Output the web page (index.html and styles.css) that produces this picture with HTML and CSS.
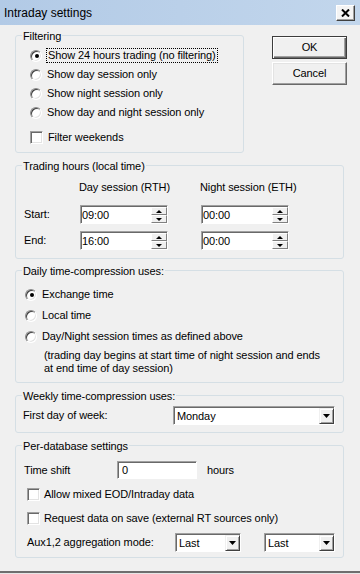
FILE: index.html
```html
<!DOCTYPE html>
<html>
<head>
<meta charset="utf-8">
<title>Intraday settings</title>
<link rel="stylesheet" href="styles.css">
</head>
<body>
<div class="window">
  <div class="titlebar">
    <span class="title">Intraday settings</span>
    <span class="close"><svg width="9" height="8" viewBox="0 0 9 8"><path d="M1 0.5 L8 7.5 M8 0.5 L1 7.5" stroke="#000" stroke-width="2"/></svg></span>
  </div>

  <div class="top">
    <fieldset class="group filtering">
      <legend>Filtering</legend>
      <div class="opts">
        <div class="opt"><span class="radio on"></span><span class="focus">Show 24 hours trading (no filtering)</span></div>
        <div class="opt"><span class="radio"></span><span>Show day session only</span></div>
        <div class="opt"><span class="radio"></span><span>Show night session only</span></div>
        <div class="opt"><span class="radio"></span><span>Show day and night session only</span></div>
        <div class="opt chkrow"><span class="chk"></span><span>Filter weekends</span></div>
      </div>
    </fieldset>
    <div class="buttons">
      <div class="btn default">OK</div>
      <div class="btn">Cancel</div>
    </div>
  </div>

  <fieldset class="group trading">
    <legend>Trading hours (local time)</legend>
    <div class="hours">
      <span></span>
      <span class="colhead">Day session (RTH)</span>
      <span></span>
      <span class="colhead">Night session (ETH)</span>

      <span>Start:</span>
      <div class="spin"><span class="val">09:00</span><span class="updown"><i class="up"></i><i class="down"></i></span></div>
      <span></span>
      <div class="spin"><span class="val">00:00</span><span class="updown"><i class="up"></i><i class="down"></i></span></div>

      <span>End:</span>
      <div class="spin"><span class="val">16:00</span><span class="updown"><i class="up"></i><i class="down"></i></span></div>
      <span></span>
      <div class="spin"><span class="val">00:00</span><span class="updown"><i class="up"></i><i class="down"></i></span></div>
    </div>
  </fieldset>

  <fieldset class="group daily">
    <legend>Daily time-compression uses:</legend>
    <div class="dopts">
      <div class="drow"><span class="radio on"></span><span>Exchange time</span></div>
      <div class="drow"><span class="radio"></span><span>Local time</span></div>
      <div class="drow"><span class="radio"></span><span>Day/Night session times as defined above</span></div>
      <p class="note">(trading day begins at start time of night session and ends<br>at end time of day session)</p>
    </div>
  </fieldset>

  <fieldset class="group weekly">
    <legend>Weekly time-compression uses:</legend>
    <div class="week">
      <span class="wlabel">First day of week:</span>
      <div class="combo wcombo"><span class="val">Monday</span><span class="arrow"><svg width="7" height="4" viewBox="0 0 7 4"><polygon points="0,0 7,0 3.5,4" fill="#000"/></svg></span></div>
    </div>
  </fieldset>

  <fieldset class="group perdb">
    <legend>Per-database settings</legend>
    <div class="db">
      <div class="shift">
        <span class="slabel">Time shift</span>
        <div class="field">0</div>
        <span class="unit">hours</span>
      </div>
      <div class="cb cb1"><span class="chk"></span><span>Allow mixed EOD/Intraday data</span></div>
      <div class="cb cb2"><span class="chk"></span><span>Request data on save (external RT sources only)</span></div>
      <div class="aux">
        <span class="alabel">Aux1,2 aggregation mode:</span>
        <div class="combo acombo1"><span class="val">Last</span><span class="arrow"><svg width="7" height="4" viewBox="0 0 7 4"><polygon points="0,0 7,0 3.5,4" fill="#000"/></svg></span></div>
        <div class="combo acombo2"><span class="val">Last</span><span class="arrow"><svg width="7" height="4" viewBox="0 0 7 4"><polygon points="0,0 7,0 3.5,4" fill="#000"/></svg></span></div>
      </div>
    </div>
  </fieldset>
</div>
</body>
</html>
```
FILE: styles.css
```css
* { box-sizing: border-box; }

body {
  margin: 0;
  font: 11px/13px "Liberation Sans", Arial, sans-serif;
  letter-spacing: -0.1px;
  color: #000;
  background: #f0f0f0;
}

.window {
  width: 360px;
  height: 574px;
  background: #f0f0f0;
  overflow: hidden;
  box-shadow: inset 0 -1px #e6e6e6, inset 0 -3px #6e6e6e;
}

/* title bar */
.titlebar {
  height: 25px;
  display: flex;
  align-items: center;
  justify-content: space-between;
  padding: 0 5px 0 4px;
  background: linear-gradient(to right, #b2cae6, #c2d6ec);
}
.title {
  font-size: 12px;
  line-height: 15px;
  padding-top: 2px;
  letter-spacing: 0;
}
.close {
  width: 19px;
  height: 16px;
  display: flex;
  align-items: center;
  justify-content: center;
  background: #f4f4f4;
  border: 1px solid;
  border-color: #fff #404040 #404040 #fff;
  box-shadow: inset -1px -1px #a0a0a0;
}

/* group boxes */
.group {
  margin: 4px 0 0 15px;
  padding: 0;
  width: 329px;
  min-width: 0;
  border: 1px solid #d5dfe5;
  border-radius: 3px;
}
.group legend {
  padding: 3px 1px 0;
  margin-left: 6px;
  line-height: 13px;
}

/* top row */
.top {
  display: flex;
  align-items: flex-start;
  padding: 2px 0 0 15px;
}
.filtering {
  margin: 0;
  width: 229px;
}
.buttons {
  display: flex;
  flex-direction: column;
  gap: 3px;
  margin: 9px 0 0 28px;
}
.btn {
  width: 75px;
  height: 23px;
  display: flex;
  align-items: center;
  justify-content: center;
  background: #f0f0f0;
  border: 1px solid;
  border-color: #fff #696969 #696969 #fff;
  box-shadow: inset -1px -1px #a0a0a0, inset 1px 1px #e3e3e3;
}
.btn.default {
  border-color: #3c3c3c;
  box-shadow: inset 1px 1px #fff, inset -1px -1px #696969, inset -2px -2px #a0a0a0;
}

/* radio + checkbox */
.radio {
  width: 12px;
  height: 12px;
  flex: none;
  border-radius: 50%;
  background: #fff;
  border: 1px solid;
  border-color: #8a8a8a #fff #fff #8a8a8a;
  box-shadow: inset 1px 1px #404040, inset -1px -1px #e3e3e3;
  display: flex;
  align-items: center;
  justify-content: center;
}
.radio.on::after {
  content: "";
  width: 4px;
  height: 4px;
  border-radius: 50%;
  background: #000;
  margin: 1px 0 0 1px;
}
.chk {
  width: 13px;
  height: 13px;
  flex: none;
  background: #fff;
  border: 1px solid;
  border-color: #a0a0a0 #fff #fff #a0a0a0;
  box-shadow: inset 1px 1px #696969, inset -1px -1px #e3e3e3;
}

/* filtering */
.opts {
  display: flex;
  flex-direction: column;
  padding: 3px 0 5px 14px;
}
.opt {
  display: flex;
  align-items: center;
  gap: 5px;
  height: 19px;
}
.chkrow { margin-top: 6px; }
.focus {
  border: 1px dotted #000;
  padding: 0 1px;
  margin-left: -1px;
}

/* trading hours */
.hours {
  display: grid;
  grid-template-columns: 56px 88px 33px 88px;
  grid-template-rows: 19px 19px 19px;
  row-gap: 7px;
  align-items: center;
  padding: 6px 0 8px 8px;
}
.colhead {
  align-self: start;
  padding-top: 2px;
  margin-left: -1px;
  white-space: nowrap;
}
.spin {
  display: flex;
  height: 19px;
  background: #fff;
  border: 1px solid;
  border-color: #a0a0a0 #fff #fff #a0a0a0;
  box-shadow: inset 1px 1px #696969;
  padding-top: 1px;
}
.spin .val {
  flex: 1;
  align-self: center;
  padding-left: 1px;
}
.updown {
  width: 16px;
  display: flex;
  flex-direction: column;
}
.updown i {
  flex: 1;
  display: flex;
  align-items: center;
  justify-content: center;
  background: #f0f0f0;
  border: 1px solid;
  border-color: #fff #808080 #808080 #fff;
}
.updown .up::after {
  content: "";
  border-left: 3px solid transparent;
  border-right: 3px solid transparent;
  border-bottom: 3px solid #000;
}
.updown .down::after {
  content: "";
  border-left: 3px solid transparent;
  border-right: 3px solid transparent;
  border-top: 3px solid #000;
}

/* daily */
.daily { margin-top: 3px; }
.dopts {
  display: flex;
  flex-direction: column;
  padding: 6px 0 7px 9px;
}
.drow {
  display: flex;
  align-items: center;
  gap: 5px;
  height: 21px;
}
.note {
  margin: 2px 0 0 19px;
  line-height: 13px;
}

/* weekly */
.week {
  display: flex;
  align-items: center;
  padding: 3px 0 7px 7px;
}
.wlabel { width: 150px; }
.combo {
  display: flex;
  height: 19px;
  background: #fff;
  border: 1px solid;
  border-color: #a0a0a0 #fff #fff #a0a0a0;
  box-shadow: inset 1px 1px #696969;
  padding: 1px 0 0 1px;
}
.combo .val {
  flex: 1;
  align-self: center;
  padding-left: 2px;
}
.combo .arrow {
  width: 15px;
  display: flex;
  align-items: center;
  justify-content: center;
  background: #f0f0f0;
  border: 1px solid;
  border-color: #f0f0f0 #404040 #404040 #f0f0f0;
  box-shadow: inset 1px 1px #fff, inset -1px -1px #a0a0a0;
}
.wcombo { width: 162px; }

/* per-database */
.db {
  padding: 8px 0 5px 0;
}
.shift {
  display: flex;
  align-items: center;
  height: 18px;
  padding-left: 8px;
}
.slabel { width: 93px; }
.field {
  width: 80px;
  height: 18px;
  background: #fff;
  border: 1px solid;
  border-color: #a0a0a0 #fff #fff #a0a0a0;
  box-shadow: inset 1px 1px #696969;
  padding: 2px 0 0 4px;
}
.unit { margin-left: 10px; }
.cb {
  display: flex;
  align-items: center;
  gap: 4px;
  height: 20px;
  padding-left: 11px;
}
.cb1 { margin-top: 5px; }
.cb2 { margin-top: 4px; }
.aux {
  display: flex;
  align-items: center;
  height: 19px;
  margin-top: 5px;
  padding-left: 11px;
}
.alabel { width: 148px; }
.acombo1 { width: 66px; }
.acombo2 { width: 71px; margin-left: 23px; }
```
